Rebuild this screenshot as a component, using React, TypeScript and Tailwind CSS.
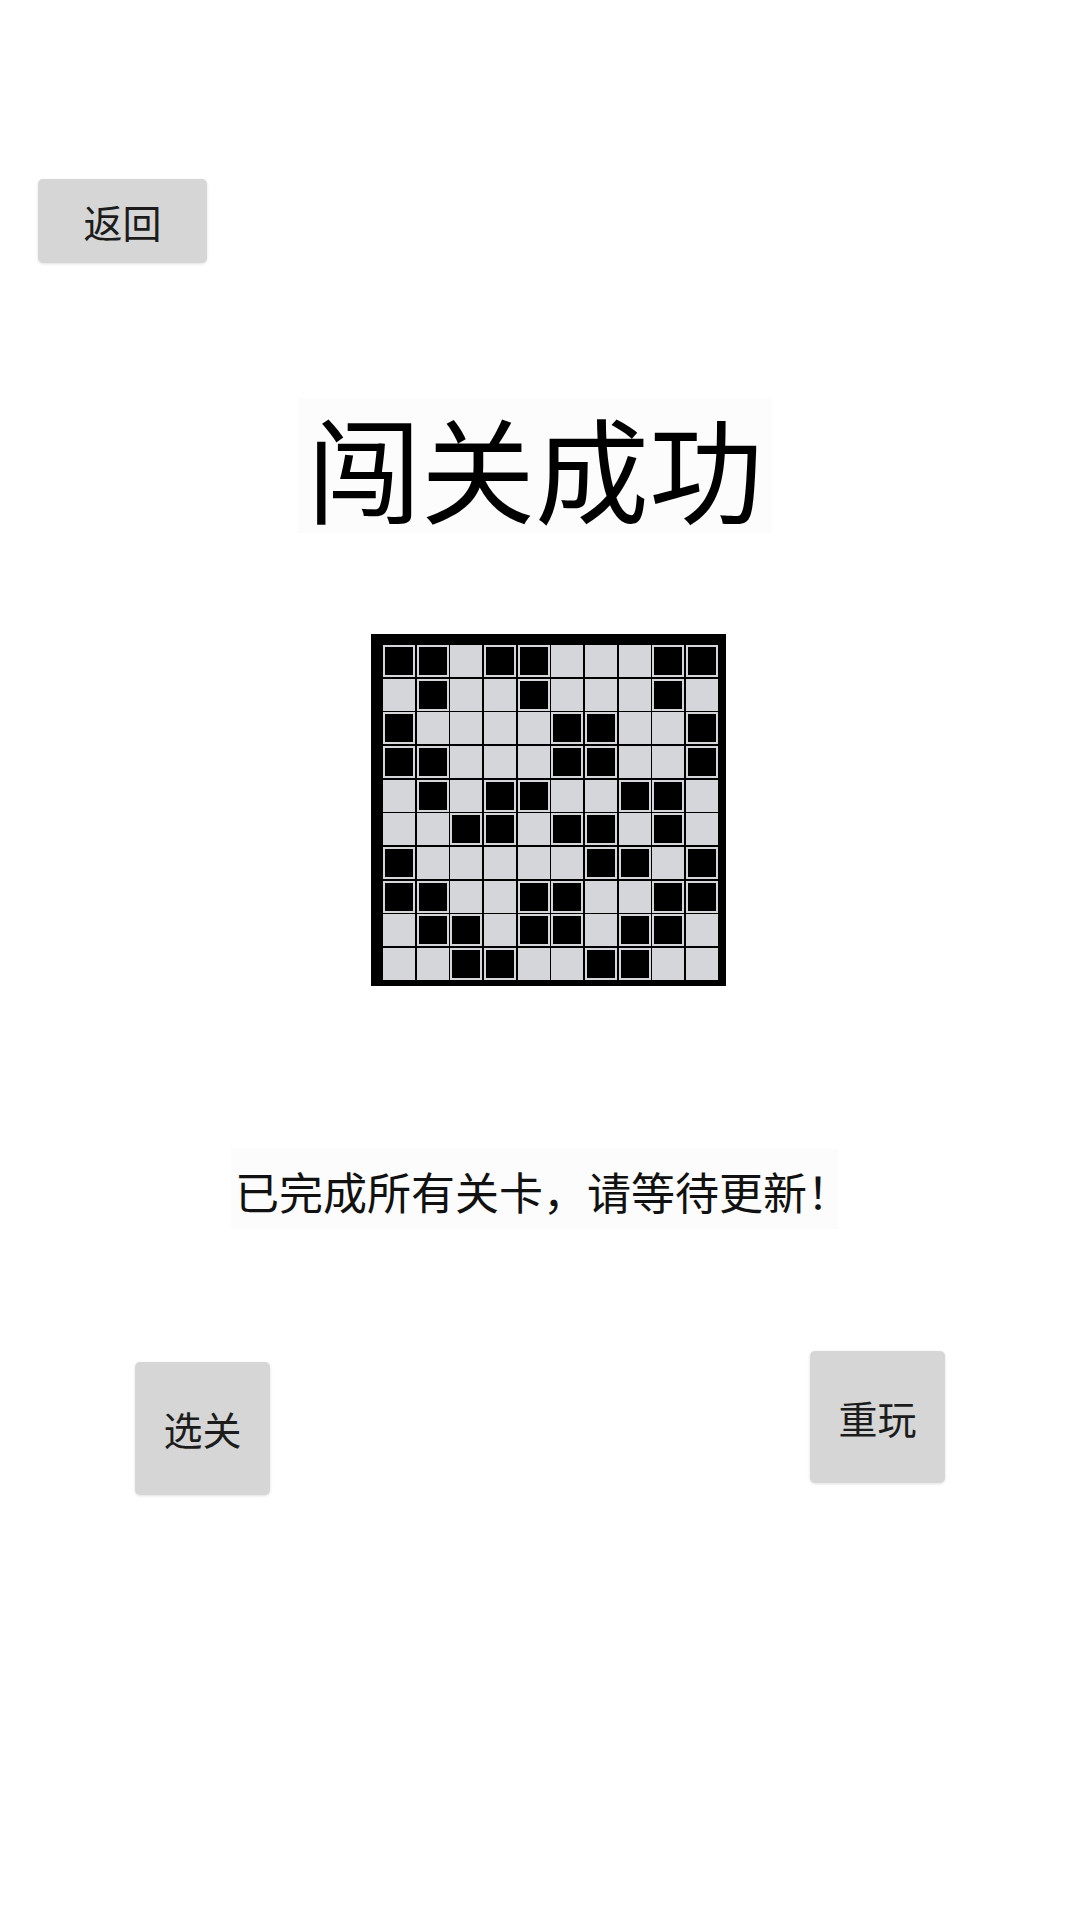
const board = [
  "1101100011",
  "0100100010",
  "1000011001",
  "1100011001",
  "0101100110",
  "0011011010",
  "1000001101",
  "1100110011",
  "0110110110",
  "0011001100",
];

function Cell({ on }: { on: boolean }) {
  return (
    <div className="h-[32px] w-[32px] bg-[#d5d6da] p-[2px]">
      {on && <div className="h-full w-full bg-black" />}
    </div>
  );
}

function GrayButton({ label, className }: { label: string; className: string }) {
  return (
    <button
      className={
        "flex items-center justify-center rounded-[5px] bg-[#d6d6d6] text-[#1c1c1c] shadow-[0_1px_3px_rgba(0,0,0,0.12)] " +
        className
      }
    >
      {label}
    </button>
  );
}

export default function App() {
  return (
    <main className="flex min-h-[1920px] w-full flex-col bg-white font-['Noto_Sans_CJK_SC',sans-serif]">
      <GrayButton label="返回" className="ml-[38px] mt-[179px] h-[84px] w-[169px] text-[39px]" />

      <div className="ml-[298px] mt-[135px] flex h-[135px] w-[474px] items-center justify-center bg-[#fcfcfc]">
        <h1 className="text-[114px] leading-none text-black">闯关成功</h1>
      </div>

      <div className="ml-[371px] mt-[101px] w-[355px] bg-black pb-[6px] pl-[12px] pr-[6px] pt-[11px]">
        <div className="grid grid-cols-[repeat(10,32px)] gap-[1.67px]">
          {board.map((row, r) =>
            row.split("").map((c, i) => <Cell key={r + "-" + i} on={c === "1"} />)
          )}
        </div>
      </div>

      <div className="ml-[231px] mt-[163px] flex h-[80px] w-[607px] items-center justify-start bg-[#fcfcfc] pl-[4px] pt-[4px]">
        <p className="shrink-0 whitespace-nowrap text-[44px] leading-none text-[#111]">已完成所有关卡，请等待更新！</p>
      </div>

      <div className="mt-[122px] flex items-start justify-between pl-[135px] pr-[135px]">
        <GrayButton label="选关" className="mt-[11px] h-[133px] w-[135px] text-[39px]" />
        <GrayButton label="重玩" className="h-[132px] w-[135px] text-[39px]" />
      </div>
    </main>
  );
}
